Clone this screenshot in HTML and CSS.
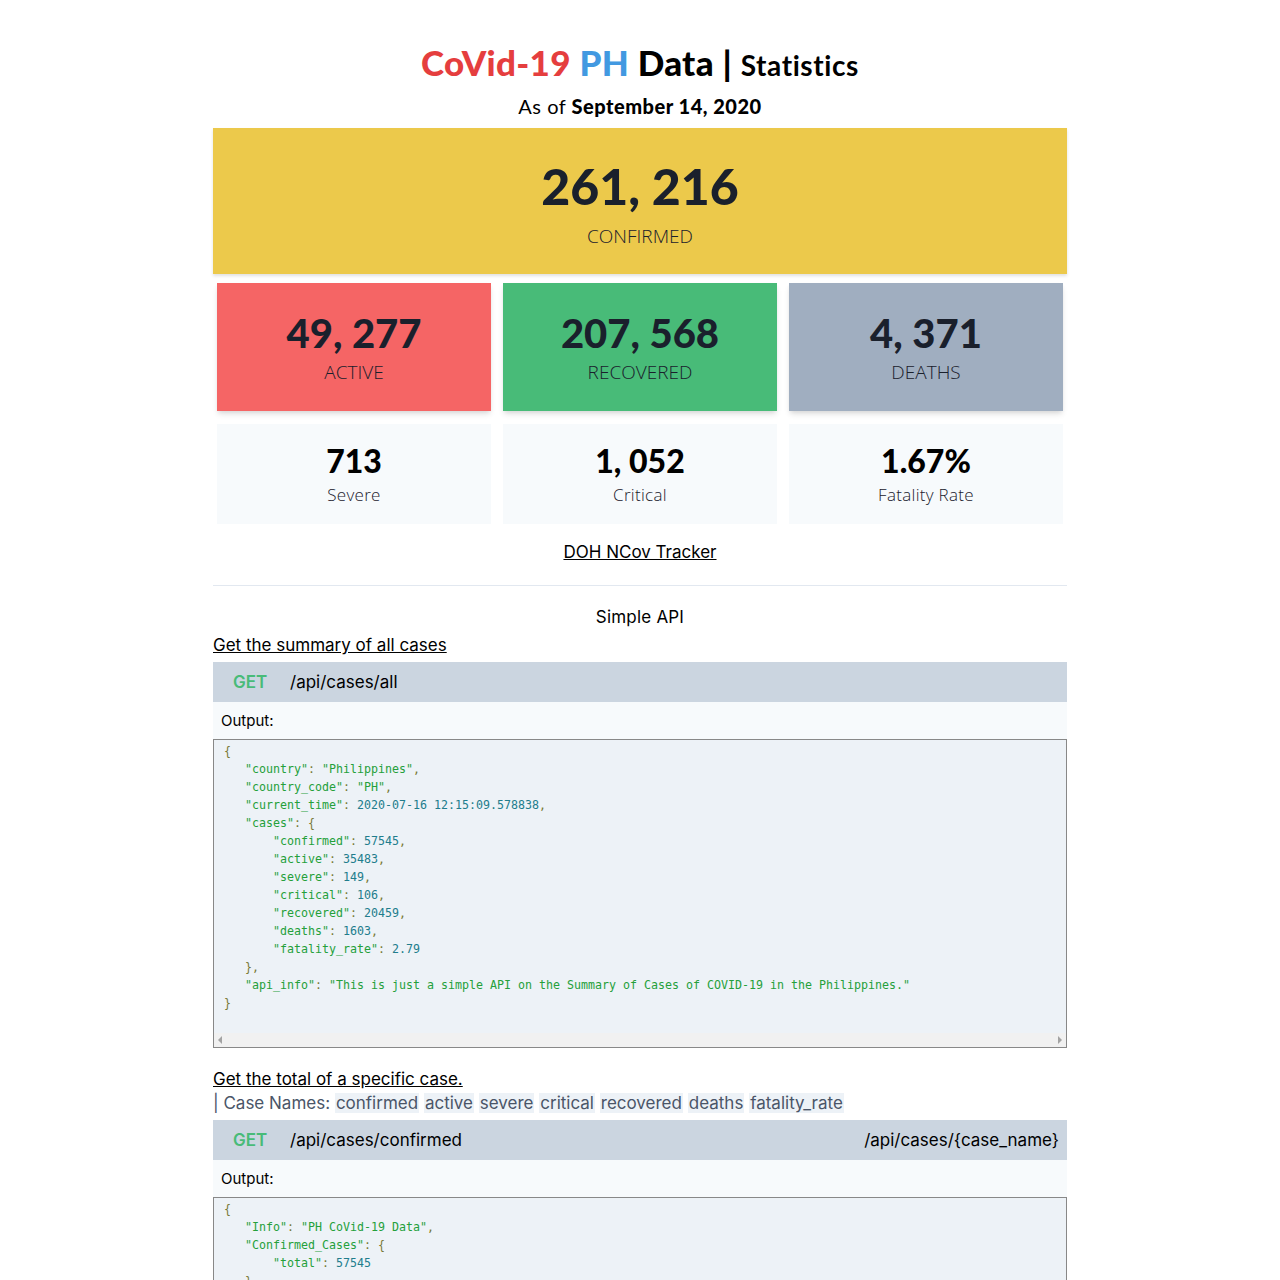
FILE: index.html
```html
<!DOCTYPE html>
<html>
<head>
<meta charset="utf-8">
<link rel="stylesheet" href="styles.css">
</head>
<body>
<div class="wrap">
  <h1 class="title"><span class="red">CoVid-19</span> <span class="blue">PH</span> Data | <span class="sub">Statistics</span></h1>
  <p class="asof">As of <b>September 14, 2020</b></p>

  <div class="confirmed">
    <div class="big">261, 216</div>
    <div class="lbl">CONFIRMED</div>
  </div>

  <div class="cards">
    <div class="card c-red"><div class="num">49, 277</div><div class="lbl">ACTIVE</div></div>
    <div class="card c-green"><div class="num">207, 568</div><div class="lbl">RECOVERED</div></div>
    <div class="card c-gray"><div class="num">4, 371</div><div class="lbl">DEATHS</div></div>
  </div>

  <div class="cards minor">
    <div class="mcard"><div class="mnum">713</div><div class="mlbl">Severe</div></div>
    <div class="mcard"><div class="mnum">1, 052</div><div class="mlbl">Critical</div></div>
    <div class="mcard"><div class="mnum">1.67%</div><div class="mlbl">Fatality Rate</div></div>
  </div>

  <p class="tracker"><a href="#">DOH NCov Tracker</a></p>
  <hr class="rule">
  <p class="api-title">Simple API</p>

  <a class="section-link" href="#">Get the summary of all cases</a>
  <div class="endpoint"><span class="get">GET</span><span class="path">/api/cases/all</span></div>
  <div class="output">Output:</div>
  <div class="codebox">
  <pre class="code"><span class="p">{</span>
   <span class="s">"country"</span><span class="p">:</span> <span class="s">"Philippines"</span><span class="p">,</span>
   <span class="s">"country_code"</span><span class="p">:</span> <span class="s">"PH"</span><span class="p">,</span>
   <span class="s">"current_time"</span><span class="p">:</span> <span class="n">2020-07-16 12:15:09.578838</span><span class="p">,</span>
   <span class="s">"cases"</span><span class="p">: {</span>
       <span class="s">"confirmed"</span><span class="p">:</span> <span class="n">57545</span><span class="p">,</span>
       <span class="s">"active"</span><span class="p">:</span> <span class="n">35483</span><span class="p">,</span>
       <span class="s">"severe"</span><span class="p">:</span> <span class="n">149</span><span class="p">,</span>
       <span class="s">"critical"</span><span class="p">:</span> <span class="n">106</span><span class="p">,</span>
       <span class="s">"recovered"</span><span class="p">:</span> <span class="n">20459</span><span class="p">,</span>
       <span class="s">"deaths"</span><span class="p">:</span> <span class="n">1603</span><span class="p">,</span>
       <span class="s">"fatality_rate"</span><span class="p">:</span> <span class="n">2.79</span>
   <span class="p">},</span>
   <span class="s">"api_info"</span><span class="p">:</span> <span class="s">"This is just a simple API on the Summary of Cases of COVID-19 in the Philippines."</span>
<span class="p">}</span>
</pre>
  <div class="hscroll"><span class="arr-l"></span><span class="arr-r"></span></div>
  </div>

  <a class="section-link second" href="#">Get the total of a specific case.</a>
  <p class="names">| Case Names: <code>confirmed</code> <code>active</code> <code>severe</code> <code>critical</code> <code>recovered</code> <code>deaths</code> <code>fatality_rate</code></p>
  <div class="endpoint"><span class="get">GET</span><span class="path">/api/cases/confirmed</span><span class="right">/api/cases/{case_name}</span></div>
  <div class="output">Output:</div>
  <div class="codebox">
  <pre class="code short"><span class="p">{</span>
   <span class="s">"Info"</span><span class="p">:</span> <span class="s">"PH CoVid-19 Data"</span><span class="p">,</span>
   <span class="s">"Confirmed_Cases"</span><span class="p">: {</span>
       <span class="s">"total"</span><span class="p">:</span> <span class="n">57545</span>
   <span class="p">}</span>
<span class="p">}</span>
</pre>
  </div>
</div>
</body>
</html>
```

FILE: styles.css
```css
html, body {
  margin: 0;
  padding: 0;
  background: #fff;
}
body {
  font-family: "Inter", "Lato", sans-serif;
  color: #000;
}
.wrap {
  width: 854px;
  margin: 0 auto;
  padding-top: 41px;
}
.title {
  margin: 0;
  text-align: center;
  font-family: "Lato", sans-serif;
  font-weight: 900;
  font-size: 35px;
  line-height: 42px;
  letter-spacing: 0.3px;
  color: #000;
}
.title .red { color: #e53e3e; }
.title .blue { color: #4299e1; }
.title .sub {
  font-size: 28px;
  font-weight: 700;
  letter-spacing: 0.6px;
}
.asof {
  margin: 8px 0 0;
  text-align: center;
  font-family: "Lato", sans-serif;
  font-size: 20px;
  line-height: 24px;
  letter-spacing: 0.5px;
}
.asof b { font-weight: 900; }
.confirmed {
  margin-top: 10px;
  height: 146px;
  background: #ecc94b;
  box-shadow: 0 2px 3px rgba(0,0,0,0.12);
  text-align: center;
  box-sizing: border-box;
  padding-top: 30px;
}
.big {
  font-family: "Lato", sans-serif;
  font-weight: 900;
  font-size: 50px;
  line-height: 56px;
  color: #1a202c;
}
.lbl {
  font-family: "Open Sans", sans-serif;
  font-weight: 300;
  font-size: 19px;
  line-height: 26px;
  color: #1a202c;
  margin-top: 9px;
}
.cards {
  display: grid;
  grid-template-columns: repeat(3, 1fr);
  gap: 12px;
  padding: 0 4px;
  margin-top: 9px;
}
.card {
  height: 128px;
  box-sizing: border-box;
  padding-top: 28px;
  text-align: center;
  box-shadow: 0 4px 6px -1px rgba(0,0,0,0.12), 0 2px 4px -1px rgba(0,0,0,0.06);
}
.c-red { background: #f56565; }
.c-green { background: #48bb78; }
.c-gray { background: #a0aec0; }
.num {
  font-family: "Lato", sans-serif;
  font-weight: 900;
  font-size: 40px;
  line-height: 44px;
  color: #1a202c;
}
.card .lbl { margin-top: 4px; }
.minor { margin-top: 13px; }
.mcard {
  height: 100px;
  background: #f7fafc;
  box-sizing: border-box;
  padding-top: 19px;
  text-align: center;
}
.mnum {
  font-family: "Lato", sans-serif;
  font-weight: 900;
  font-size: 32px;
  line-height: 36px;
  color: #000;
}
.mlbl {
  font-family: "Open Sans", sans-serif;
  font-weight: 300;
  font-size: 17px;
  line-height: 22px;
  color: #1a202c;
  margin-top: 5px;
  letter-spacing: 0.3px;
}
.tracker {
  margin: 17px 0 0;
  text-align: center;
  font-size: 17px;
  line-height: 22px;
}
.tracker a { color: #000; }
.rule {
  margin: 22px 0 0;
  border: 0;
  border-top: 1px solid #e2e8f0;
}
.api-title {
  margin: 20px 0 0;
  text-align: center;
  font-size: 17px;
  line-height: 22px;
  letter-spacing: 0.2px;
}
.section-link {
  display: block;
  margin-top: 6px;
  font-size: 17px;
  line-height: 22px;
  color: #000;
}
.section-link.second { margin-top: 20px; }
.endpoint {
  margin-top: 6px;
  height: 40px;
  background: #cbd5e0;
  display: flex;
  align-items: center;
  padding: 0 8px 0 20px;
  font-size: 17px;
}
.get {
  color: #48bb78;
  font-weight: 600;
  width: 57px;
}
.path { color: #000; }
.right { margin-left: auto; color: #000; }
.output {
  height: 37px;
  background: #f7fafc;
  display: flex;
  align-items: center;
  padding-left: 8px;
  font-size: 15px;
}
.codebox {
  box-sizing: border-box;
  height: 309px;
  background: #edf2f7;
  border: 1px solid #888;
  display: flex;
  flex-direction: column;
}
.code {
  margin: 0;
  flex: 1;
  padding: 2px 10px 0;
  font-family: "DejaVu Sans Mono", monospace;
  font-size: 11.63px;
  line-height: 18px;
  overflow: hidden;
  color: #333;
}
.code .s { color: #24a03a; }
.code .n { color: #217d8c; }
.code .p { color: #787836; }
.hscroll {
  height: 14px;
  background: #f1f1f1;
  display: flex;
  align-items: center;
  justify-content: space-between;
  padding: 0 4px;
}
.arr-l, .arr-r {
  width: 0;
  height: 0;
  border-top: 4px solid transparent;
  border-bottom: 4px solid transparent;
}
.arr-l { border-right: 4px solid #a3a3a3; }
.arr-r { border-left: 4px solid #a3a3a3; }
.names {
  margin: 2px 0 0;
  font-size: 17px;
  line-height: 22px;
  color: #4a5568;
}
.names code {
  font-family: "Inter", sans-serif;
  background: #edf2f7;
  padding: 0 1px;
}
```
